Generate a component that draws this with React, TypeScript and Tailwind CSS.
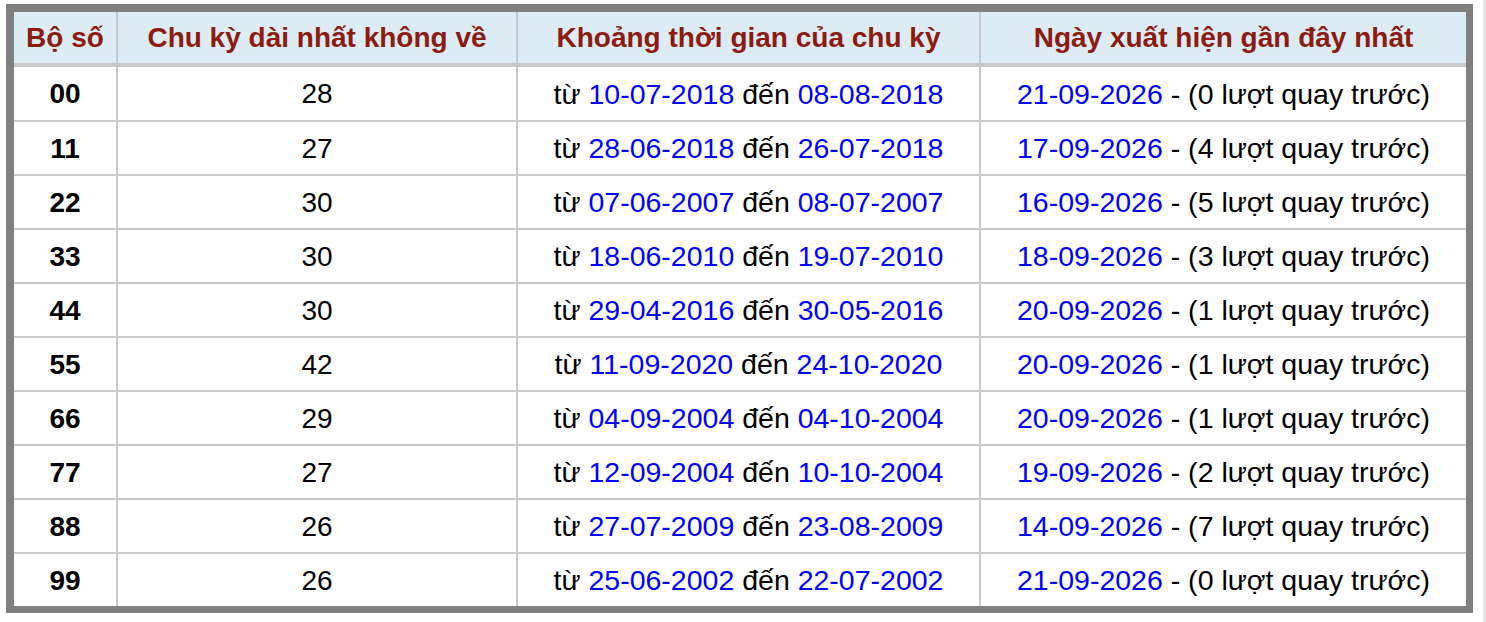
import React from "react";

type Row = {
  bo: string;
  chuKy: string;
  from: string;
  to: string;
  ngay: string;
  luot: string;
};

const rows: Row[] = [
  { bo: "00", chuKy: "28", from: "10-07-2018", to: "08-08-2018", ngay: "21-09-2026", luot: "0" },
  { bo: "11", chuKy: "27", from: "28-06-2018", to: "26-07-2018", ngay: "17-09-2026", luot: "4" },
  { bo: "22", chuKy: "30", from: "07-06-2007", to: "08-07-2007", ngay: "16-09-2026", luot: "5" },
  { bo: "33", chuKy: "30", from: "18-06-2010", to: "19-07-2010", ngay: "18-09-2026", luot: "3" },
  { bo: "44", chuKy: "30", from: "29-04-2016", to: "30-05-2016", ngay: "20-09-2026", luot: "1" },
  { bo: "55", chuKy: "42", from: "11-09-2020", to: "24-10-2020", ngay: "20-09-2026", luot: "1" },
  { bo: "66", chuKy: "29", from: "04-09-2004", to: "04-10-2004", ngay: "20-09-2026", luot: "1" },
  { bo: "77", chuKy: "27", from: "12-09-2004", to: "10-10-2004", ngay: "19-09-2026", luot: "2" },
  { bo: "88", chuKy: "26", from: "27-07-2009", to: "23-08-2009", ngay: "14-09-2026", luot: "7" },
  { bo: "99", chuKy: "26", from: "25-06-2002", to: "22-07-2002", ngay: "21-09-2026", luot: "0" },
];

const headers = [
  "Bộ số",
  "Chu kỳ dài nhất không về",
  "Khoảng thời gian của chu kỳ",
  "Ngày xuất hiện gần đây nhất",
];

export default function App() {
  return (
    <div
      className="w-[1486px] h-[622px] bg-white flex overflow-hidden"
      style={{ fontFamily: '"Liberation Sans", Arial, Helvetica, sans-serif' }}
    >
      <div className="ml-[6px] mt-[4px] self-start border-[#808080] border-l-8 border-t-8 border-r-[7px] border-b-[7px]">
        <div className="grid grid-cols-[102px_398px_461px_485px] gap-x-[2px] bg-[#c9c9c9]">
          {headers.map((h) => (
            <div
              key={h}
              className="h-[51px] mb-[4px] bg-[#dcebf4] flex items-center justify-center text-[28px] font-bold text-[#8c1b12] whitespace-nowrap"
            >
              {h}
            </div>
          ))}
          {rows.map((r, i) => {
            const cell =
              (i === 0 ? "h-[53px] " : "h-[52px] mt-[2px] ") +
              "bg-white flex items-center justify-center whitespace-nowrap text-black pt-[1px]";
            return (
              <React.Fragment key={r.bo}>
                <div className={cell + " text-[28px] font-bold"}>{r.bo}</div>
                <div className={cell + " text-[28px]"}>{r.chuKy}</div>
                <div className={cell + " text-[28.5px]"}>
                  từ&nbsp;<span className="text-[#0000ff]">{r.from}</span>&nbsp;đến&nbsp;
                  <span className="text-[#0000ff]">{r.to}</span>
                </div>
                <div className={cell + " text-[28.5px]"}>
                  <span className="text-[#0000ff]">{r.ngay}</span>&nbsp;- ({r.luot} lượt quay trước)
                </div>
              </React.Fragment>
            );
          })}
        </div>
      </div>
      <div className="ml-auto w-[3px] h-full bg-[#e4e4e4]" />
    </div>
  );
}
